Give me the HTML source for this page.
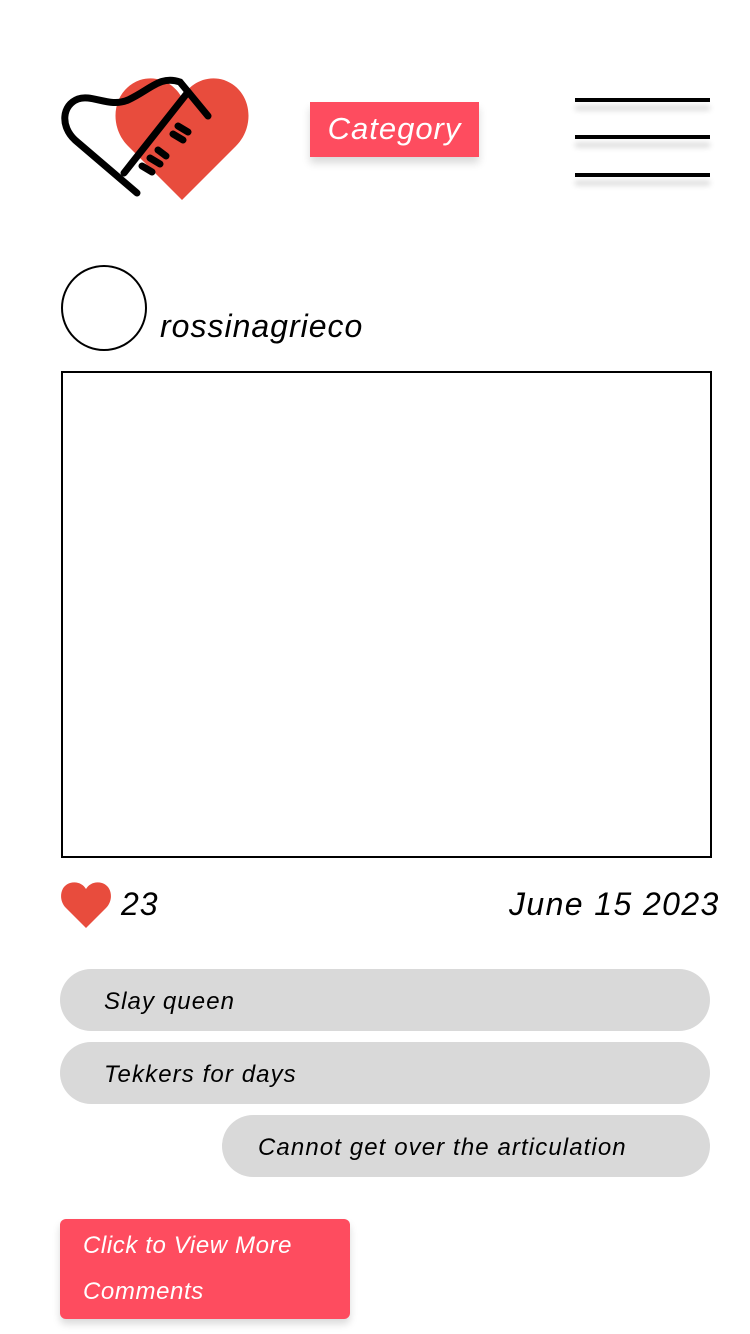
<!DOCTYPE html>
<html><head><meta charset="utf-8"><style>
body{margin:0;width:750px;height:1334px;background:#fff;position:relative;overflow:hidden;font-family:"Liberation Sans",sans-serif;font-style:italic;color:#000}
.a{position:absolute}
.cat{left:310px;top:102px;width:169px;height:55px;background:#fe4c5f;color:#fff;font-size:31px;line-height:53px;text-align:center;box-shadow:0 6px 8px rgba(0,0,0,.15);letter-spacing:1px}
.bar{left:575px;width:135px;height:4px;background:#000;box-shadow:0 8px 6px rgba(0,0,0,.18)}
.c{background:#d9d9d9;border-radius:31px;height:62px;font-size:24px;line-height:66px;letter-spacing:1.1px}
</style></head><body>
<svg class="a" style="left:0;top:0" width="300" height="220" viewBox="0 0 300 220">
<path d="M182 200 L128 146 C108 126 112 90 140 80 C160 74 176 86 182 98 C188 86 204 74 224 80 C252 90 256 126 236 146 Z" fill="#e84c3d"/>
<g fill="none" stroke="#000" stroke-width="7" stroke-linecap="round">
<path d="M137 193 L75 140 C60 126 62 105 78 99 C92 94 110 108 128 100 C150 90 160 75 180 82 L208 116"/>
<path d="M188 92 L124 173"/>
<path d="M178 126 L188 132 M173 134 L183 140 M158 150 L166 156 M150 158 L160 164 M142 166 L152 172"/>
</g></svg>
<div class="a cat">Category</div>
<div class="a bar" style="top:98px"></div>
<div class="a bar" style="top:135px"></div>
<div class="a bar" style="top:173px"></div>
<div class="a" style="left:61px;top:265px;width:82px;height:82px;border:2px solid #000;border-radius:50%"></div>
<div class="a" style="left:160px;top:308px;font-size:32px;letter-spacing:1px">rossinagrieco</div>
<div class="a" style="left:61px;top:371px;width:647px;height:483px;border:2px solid #000"></div>
<svg class="a" style="left:60px;top:880px" width="52" height="48" viewBox="0 0 52 48"><path d="M26 48 L6 28 C-2 20 0 6 10 3 C17 1 23 4 26 9 C29 4 35 1 42 3 C52 6 54 20 46 28 Z" fill="#e84c3d"/></svg>
<div class="a" style="left:121px;top:886px;font-size:32px;letter-spacing:1px">23</div>
<div class="a" style="left:509px;top:886px;font-size:32px;letter-spacing:1.4px">June 15 2023</div>
<div class="a c" style="left:60px;top:969px;width:650px;"><span style="padding-left:44px">Slay queen</span></div>
<div class="a c" style="left:60px;top:1042px;width:650px;"><span style="padding-left:44px">Tekkers for days</span></div>
<div class="a c" style="left:222px;top:1115px;width:488px;"><span style="padding-left:36px">Cannot get over the articulation</span></div>
<div class="a" style="left:60px;top:1219px;width:290px;height:100px;background:#fe4c5f;border-radius:6px;color:#fff;font-size:24px;line-height:46px;box-sizing:border-box;padding:4px 0 0 23px;box-shadow:0 5px 8px rgba(0,0,0,.15);letter-spacing:.6px">Click to View More<br>Comments</div>
</body></html>
